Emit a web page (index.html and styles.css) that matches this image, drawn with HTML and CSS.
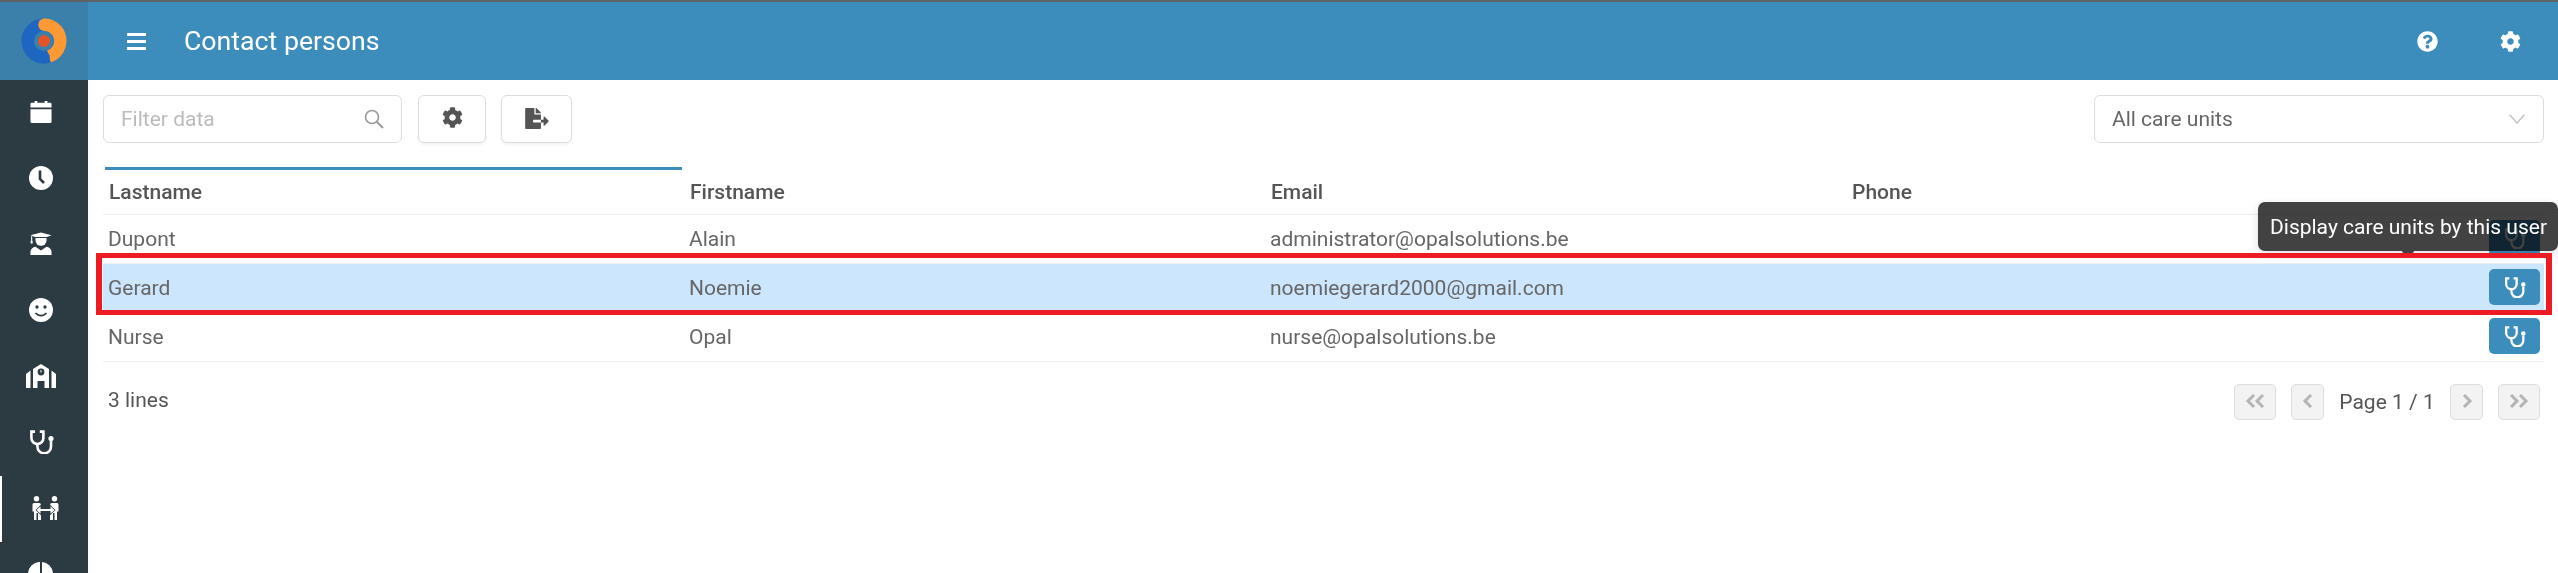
FILE: index.html
```html
<!DOCTYPE html>
<html lang="en">
<head>
    <meta charset="UTF-8">
    <meta name="viewport" content="width=device-width, initial-scale=1.0">
    <title>Contact persons</title>
    <link rel="stylesheet" href="styles.css">
</head>
<body>
    <svg class="icon-defs" width="0" height="0">
        <symbol id="i-gear" viewBox="0 0 512 512">
            <path d="M487.4 315.7l-42.6-24.6c4.3-23.2 4.3-47 0-70.2l42.6-24.6c4.9-2.8 7.1-8.6 5.5-14-11.1-35.6-30-67.8-54.7-94.6-3.8-4.1-10-5.1-14.8-2.3L380.8 110c-17.9-15.4-38.5-27.3-60.8-35.1V25.8c0-5.6-3.9-10.5-9.4-11.7-36.7-8.2-74.3-7.8-109.2 0-5.5 1.2-9.4 6.1-9.4 11.7V75c-22.2 7.9-42.8 19.8-60.8 35.1L88.7 85.5c-4.9-2.8-11-1.9-14.8 2.3-24.7 26.7-43.6 58.9-54.7 94.6-1.7 5.4.6 11.2 5.5 14L67.3 221c-4.3 23.2-4.3 47 0 70.2l-42.6 24.6c-4.9 2.8-7.1 8.6-5.5 14 11.1 35.6 30 67.8 54.7 94.6 3.8 4.1 10 5.1 14.8 2.3l42.6-24.6c17.9 15.4 38.5 27.3 60.8 35.1v49.2c0 5.6 3.9 10.5 9.4 11.7 36.7 8.2 74.3 7.8 109.2 0 5.5-1.2 9.4-6.1 9.4-11.7v-49.2c22.2-7.9 42.8-19.8 60.8-35.1l42.6 24.6c4.9 2.8 11 1.9 14.8-2.3 24.7-26.7 43.6-58.9 54.7-94.6 1.5-5.5-.7-11.3-5.6-14.1zM256 336c-44.1 0-80-35.9-80-80s35.9-80 80-80 80 35.9 80 80-35.9 80-80 80z"/>
        </symbol>
        <symbol id="i-stetho" viewBox="0 0 25 24">
            <g fill="none" stroke="currentColor" stroke-width="2.6">
                <path d="M6 1.6H2.4V8a6 6 0 0 0 12 0V1.6H10.800"/>
                <path d="M8.400 14v2.500a6.800 6.800 0 0 0 13.600 0V11"/>
                <circle cx="22" cy="8.600" r="1.300"/>
            </g>
        </symbol>
    </svg>

    <div class="app">
        <header class="topbar">
            <div class="logo">
                <svg width="46" height="46" viewBox="0 0 46 46">
                    <circle cx="23" cy="23" r="16.250" fill="none" stroke="#1f66c1" stroke-width="12.500"/>
                    <path d="M23 6.750A16.250 16.250 0 0 1 28 38.500" fill="none" stroke="#fd9a34" stroke-width="12.500"/>
                    <circle cx="23.500" cy="6.750" r="6.250" fill="#fd9a34"/>
                    <circle cx="22.500" cy="39.250" r="6.250" fill="#1f66c1"/>
                    <circle cx="23" cy="23" r="6" fill="#e25527"/>
                </svg>
            </div>
            <div class="topbar-main">
                <div class="burger"><span></span><span></span><span></span></div>
                <h1 class="page-title">Contact persons</h1>
                <div class="topbar-tools">
                    <svg class="tool-icon" viewBox="0 0 512 512"><path d="M504 256c0 136.997-111.043 248-248 248S8 392.997 8 256C8 119.083 119.043 8 256 8s248 111.083 248 248zM262.655 90c-54.497 0-89.255 22.957-116.549 63.758-3.536 5.286-2.353 12.415 2.715 16.258l34.699 26.31c5.205 3.947 12.621 3.008 16.665-2.122 17.864-22.658 30.113-35.797 57.303-35.797 20.429 0 45.698 13.148 45.698 32.958 0 14.976-12.363 22.667-32.534 33.976C247.128 238.528 216 254.941 216 296v4c0 6.627 5.373 12 12 12h56c6.627 0 12-5.373 12-12v-1.333c0-28.462 83.186-29.647 83.186-106.667 0-58.002-60.165-102-116.531-102zM256 338c-25.365 0-46 20.635-46 46 0 25.364 20.635 46 46 46s46-20.636 46-46c0-25.365-20.635-46-46-46z"/></svg>
                    <svg class="tool-icon"><use href="#i-gear"/></svg>
                </div>
            </div>
        </header>

        <div class="body-row">
            <nav class="sidebar">
                <a class="nav-item">
                    <svg width="22" height="24" viewBox="0 0 24 26" fill="#fff">
                        <path d="M2 3h3V1h3v2h8V1h3v2h3a1.500 1.500 0 0 1 1.500 1.500V8H.500V4.500A1.500 1.500 0 0 1 2 3z"/>
                        <path d="M.500 10h23v13.500a1.500 1.500 0 0 1-1.500 1.500H2a1.500 1.500 0 0 1-1.500-1.500z"/>
                    </svg>
                </a>
                <a class="nav-item">
                    <svg width="26" height="26" viewBox="0 0 26 26">
                        <circle cx="13" cy="13" r="12" fill="#fff"/>
                        <path d="M12 5.500v8.500l4 4" fill="none" stroke="#2c3b41" stroke-width="2.600"/>
                    </svg>
                </a>
                <a class="nav-item">
                    <svg width="22" height="24" viewBox="0 0 24 26" fill="#fff">
                        <path d="M.500 3.500L12 .500l11.500 3-5 1.800H5.500z"/>
                        <path d="M6 6.500h12v2.500a6 6 0 0 1-12 0z"/>
                        <path d="M1.200 4.500h1.200v5h.5v3H.700v-3h.5z"/>
                        <path d="M.500 25v-3.500c0-3 2.500-5 5.500-5.500l6 4 6-4c3 .5 5.500 2.500 5.500 5.500V25z"/>
                    </svg>
                </a>
                <a class="nav-item">
                    <svg width="26" height="26" viewBox="0 0 26 26">
                        <circle cx="13" cy="13" r="12" fill="#fff"/>
                        <circle cx="9" cy="10" r="1.700" fill="#2c3b41"/>
                        <circle cx="17" cy="10" r="1.700" fill="#2c3b41"/>
                        <path d="M7.500 16c3 3.500 8 3.500 11 0" fill="none" stroke="#2c3b41" stroke-width="1.800"/>
                    </svg>
                </a>
                <a class="nav-item">
                    <svg width="30" height="24" viewBox="0 0 30 24">
                        <path d="M15 0l8 5v19h-4.500v-7h-7v7H7V5z" fill="#fff"/>
                        <path d="M0 10l4.500-3.500V24H0zM30 10l-4.500-3.500V24H30z" fill="#fff"/>
                        <circle cx="15" cy="8" r="3.400" fill="#2c3b41"/>
                        <path d="M15 6v2.500" stroke="#fff" stroke-width="1"/>
                    </svg>
                </a>
                <a class="nav-item">
                    <svg class="nav-stetho"><use href="#i-stetho"/></svg>
                </a>
                <a class="nav-item active">
                    <svg class="nav-people" width="27" height="24" viewBox="0 0 27 24" fill="#fff">
                        <circle cx="4.500" cy="2.700" r="2.700"/>
                        <circle cx="22.500" cy="2.700" r="2.700"/>
                        <path d="M2 7h5a2 2 0 0 1 2 2v15H6v-7H4.500v7H2v-8.500H.500V8.500A1.500 1.500 0 0 1 2 7z"/>
                        <path d="M25 7h-5a2 2 0 0 0-2 2v15h3v-7h1.500v7H25v-8.500h1.500V8.500A1.500 1.500 0 0 0 25 7z"/>
                        <path class="people-arrow" d="M4.500 14l4-3.800v2.800h10v-2.800l4 3.800-4 3.800V15h-10v2.800z"/>
                    </svg>
                </a>
                <a class="nav-item">
                    <svg width="26" height="26" viewBox="0 0 26 26" fill="#fff">
                        <path d="M12 1v24a12 12 0 0 1 0-24z"/>
                        <path d="M14 1a12 12 0 0 1 11 11H14z"/>
                        <path d="M14 14h11a12 12 0 0 1-11 11z"/>
                    </svg>
                </a>
            </nav>

            <main class="content">
                <div class="toolbar">
                    <div class="search-box">
                        <span class="placeholder">Filter data</span>
                        <svg class="search-icon" width="20" height="20" viewBox="0 0 20 20" fill="none" stroke="#9a9a9a" stroke-width="1.600">
                            <circle cx="8" cy="8" r="6.500"/>
                            <path d="M12.800 12.800L19 19" stroke-width="2"/>
                        </svg>
                    </div>
                    <button class="tool-button gear-button"><svg class="btn-gear"><use href="#i-gear"/></svg></button>
                    <button class="tool-button export-button">
                        <svg class="btn-export" viewBox="0 0 576 512"><path d="M384 121.900c0-6.300-2.500-12.400-7-16.900L279.100 7c-4.500-4.500-10.600-7-17-7H256v128h128zM571 308l-95.700-96.400c-10.100-10.100-27.400-3-27.400 11.300V288h-64v64h64v65.200c0 14.300 17.300 21.400 27.400 11.300L571 332c6.600-6.600 6.600-17.400 0-24zm-379 28v-32c0-8.800 7.200-16 16-16h176V160H248c-13.200 0-24-10.800-24-24V0H24C10.700 0 0 10.700 0 24v464c0 13.300 10.700 24 24 24h336c13.300 0 24-10.700 24-24V352H208c-8.800 0-16-7.200-16-16z"/></svg>
                    </button>
                    <div class="unit-select">
                        <span>All care units</span>
                        <svg width="16" height="10" viewBox="0 0 16 10" fill="none" stroke="#c4c4c4" stroke-width="1.500"><path d="M.700.700L8 9l7.300-8.300"/></svg>
                    </div>
                </div>

                <table class="grid">
                    <thead>
                        <tr>
                            <th class="col-text"><div class="th-label sorted">Lastname</div></th>
                            <th class="col-text"><div class="th-label">Firstname</div></th>
                            <th class="col-text"><div class="th-label">Email</div></th>
                            <th class="col-text"><div class="th-label">Phone</div></th>
                            <th><div class="th-label">&nbsp;</div></th>
                        </tr>
                    </thead>
                    <tbody>
                        <tr>
                            <td>Dupont</td>
                            <td>Alain</td>
                            <td>administrator@opalsolutions.be</td>
                            <td></td>
                            <td class="cell-action"><button class="unit-button"><svg><use href="#i-stetho"/></svg></button></td>
                        </tr>
                        <tr class="selected">
                            <td>Gerard</td>
                            <td>Noemie</td>
                            <td>noemiegerard2000@gmail.com</td>
                            <td></td>
                            <td class="cell-action"><button class="unit-button"><svg><use href="#i-stetho"/></svg></button></td>
                        </tr>
                        <tr>
                            <td>Nurse</td>
                            <td>Opal</td>
                            <td>nurse@opalsolutions.be</td>
                            <td></td>
                            <td class="cell-action"><button class="unit-button"><svg><use href="#i-stetho"/></svg></button></td>
                        </tr>
                    </tbody>
                </table>

                <div class="grid-footer">
                    <span class="line-count">3 lines</span>
                    <div class="pager">
                        <button class="page-button wide"><svg width="22" height="14" viewBox="0 0 22 14"><path d="M10 1L4 7l6 6M19 1l-6 6 6 6"/></svg></button>
                        <button class="page-button"><svg width="12" height="14" viewBox="0 0 12 14"><path d="M9 1L3 7l6 6"/></svg></button>
                        <span class="page-label">Page 1 / 1</span>
                        <button class="page-button"><svg width="12" height="14" viewBox="0 0 12 14"><path d="M3 1l6 6-6 6"/></svg></button>
                        <button class="page-button wide"><svg width="22" height="14" viewBox="0 0 22 14"><path d="M3 1l6 6-6 6M12 1l6 6-6 6"/></svg></button>
                    </div>
                </div>

                <div class="tooltip"><span class="tooltip-text">Display care units by this user</span></div>
            </main>
        </div>
    </div>

    <div class="red-frame"></div>
</body>
</html>
```

FILE: styles.css
```css
* {
    margin: 0;
    padding: 0;
    box-sizing: border-box;
}
html, body {
    height: 100%;
    overflow: hidden;
}
body {
    background-color: #fff;
    font-family: Roboto, "Liberation Sans", sans-serif;
    font-size: 21px;
    color: #666;
    border-top: 2px solid #5f6368;
}
.icon-defs {
    position: absolute;
}
button {
    font: inherit;
}

/* top bar */
.topbar {
    display: flex;
    height: 78px;
    color: #fff;
}
.logo {
    width: 88px;
    background-color: #3a80ab;
    display: flex;
    justify-content: center;
    align-items: center;
}
.topbar-main {
    flex: 1;
    display: flex;
    align-items: center;
    background-color: #3c8dbc;
    padding-left: 39px;
}
.burger {
    width: 19px;
    display: flex;
    flex-direction: column;
    gap: 4px;
}
.burger span {
    height: 3px;
    background-color: #fff;
}
.page-title {
    font-size: 26.7px;
    font-weight: 400;
    margin-left: 38px;
}
.topbar-tools {
    margin-left: auto;
    display: flex;
    gap: 62px;
    padding-right: 37px;
}
.tool-icon {
    width: 21px;
    height: 21px;
    fill: #fff;
}

/* sidebar */
.body-row {
    display: flex;
    height: 493px;
}
.sidebar {
    width: 88px;
    flex-shrink: 0;
    background-color: #2c3b41;
    overflow: hidden;
}
.nav-item {
    display: flex;
    justify-content: center;
    align-items: center;
    height: 66px;
    padding-right: 8px;
    padding-bottom: 2px;
    border-left: 2px solid transparent;
}
.nav-item.active {
    border-left-color: #fff;
}
.nav-people {
    margin-left: 9px;
}
.people-arrow {
    stroke: #2c3b41;
    stroke-width: 1.4;
    paint-order: stroke;
}
.nav-stetho {
    width: 25px;
    height: 24px;
    color: #fff;
}

/* main */
.content {
    flex: 1;
    min-width: 0;
    position: relative;
    padding: 15px 14px 0 15px;
}
.toolbar {
    display: flex;
    height: 48px;
    margin-bottom: 24px;
}
.search-box {
    width: 299px;
    display: flex;
    align-items: center;
    justify-content: space-between;
    padding: 0 17px;
    border: 1px solid #ddd;
    border-radius: 6px;
}
.placeholder {
    color: #bbb;
}
.tool-button {
    height: 48px;
    background-color: #fff;
    border: 1px solid #ddd;
    border-radius: 6px;
    box-shadow: 0 2px 3px rgba(0, 0, 0, 0.05);
    display: flex;
    justify-content: center;
    align-items: center;
}
.gear-button {
    width: 68px;
    margin-left: 16px;
}
.export-button {
    width: 71px;
    margin-left: 15px;
}
.btn-gear {
    width: 21px;
    height: 21px;
    fill: #555;
    margin-bottom: 3px;
}
.btn-export {
    width: 24px;
    height: 21px;
    fill: #555;
    margin-bottom: 1px;
}
.unit-select {
    margin-left: auto;
    width: 450px;
    display: flex;
    align-items: center;
    justify-content: space-between;
    padding: 0 18px 0 17px;
    border: 1px solid #ddd;
    border-radius: 6px;
}

/* table */
.grid {
    width: 100%;
    table-layout: fixed;
    border-collapse: collapse;
}
.grid th {
    padding: 0 2px;
    border-bottom: 1px solid #eee;
    text-align: left;
    font-weight: 500;
    color: #555;
}
.grid .col-text {
    width: 581px;
}
.th-label {
    height: 47px;
    padding: 7px 4px 0;
    border-top: 3px solid transparent;
    line-height: 30px;
}
.th-label.sorted {
    border-top-color: #3c8dbc;
}
.grid td {
    height: 49px;
    padding: 0 5px;
    border-bottom: 1px solid #eee;
    vertical-align: middle;
}
.selected td {
    background-color: #cbe6fd;
}
.grid .cell-action {
    padding: 0 4px 2px 0;
    text-align: right;
}
.unit-button {
    width: 51px;
    height: 36px;
    border: none;
    border-radius: 5px;
    background-color: #3c8dbc;
    color: #fff;
    display: inline-flex;
    justify-content: center;
    align-items: center;
    vertical-align: middle;
}
.unit-button svg {
    width: 22px;
    height: 21px;
}

/* footer */
.grid-footer {
    display: flex;
    justify-content: space-between;
    align-items: center;
    margin-top: 22px;
    padding: 0 4px 0 5px;
}
.line-count {
    color: #555;
    margin-bottom: 4px;
}
.pager {
    display: flex;
    align-items: center;
}
.page-button {
    width: 33px;
    height: 36px;
    background-color: #f3f3f3;
    border: 1px solid #ddd;
    border-radius: 5px;
    display: flex;
    justify-content: center;
    align-items: center;
}
.page-button.wide {
    width: 42px;
}
.page-button svg {
    fill: none;
    stroke: #b5b5b5;
    stroke-width: 3;
    margin-bottom: 3px;
}
.page-button.wide:first-child {
    margin-right: 15px;
}
.page-button.wide:last-child {
    margin-left: 15px;
}
.page-label {
    width: 126px;
    text-align: center;
    color: #555;
}

/* overlays */
.tooltip {
    position: absolute;
    top: 122px;
    right: 0;
    height: 49px;
    width: 300px;
    display: flex;
    align-items: center;
    padding-left: 12px;
    color: #fff;
    white-space: nowrap;
}
.tooltip::before {
    content: "";
    position: absolute;
    inset: 0;
    background-color: #424242;
    border-radius: 7px;
    box-shadow: 0 3px 10px rgba(0, 0, 0, 0.12);
    mix-blend-mode: multiply;
}
.tooltip::after {
    content: "";
    position: absolute;
    left: 144px;
    bottom: -2px;
    width: 12px;
    height: 2px;
    background-color: #424242;
    border-radius: 0 0 6px 6px;
}
.tooltip-text {
    position: relative;
}
.red-frame {
    position: absolute;
    left: 96px;
    top: 253px;
    width: 2456px;
    height: 62px;
    border: solid #ed1c24;
    border-width: 5px 6px;
}
```
